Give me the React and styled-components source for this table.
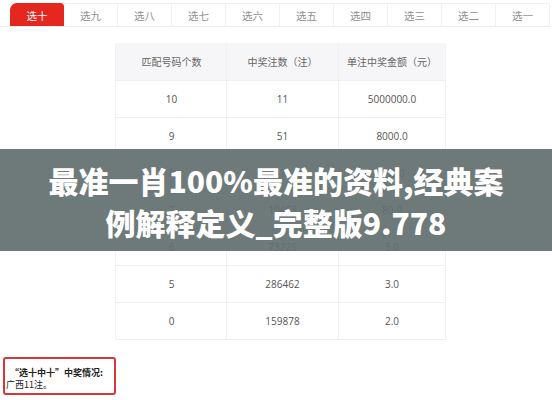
import React from 'react';
import styled, { createGlobalStyle } from 'styled-components';

const GlobalStyle = createGlobalStyle`
  body {
    margin: 0;
    background: #fff;
    font-family: "Noto Sans", "Noto Sans CJK SC", sans-serif;
  }
`;

const Page = styled.div`
  position: relative;
  width: 552px;
  height: 400px;
  overflow: hidden;
  background: #fff;
`;

const TabBar = styled.div`
  display: flex;
  padding: 3px 0 0 10px;
  border-bottom: 1px solid #ececec;
  width: 540px;
`;

const Tab = styled.div`
  width: 54px;
  height: 23px;
  box-sizing: border-box;
  display: flex;
  align-items: center;
  justify-content: center;
  font-size: 10.5px;
  font-family: "Noto Sans CJK SC", sans-serif;
  color: ${(p) => (p.$active ? '#fff' : '#8f8f8f')};
  background: ${(p) => (p.$active ? '#e5281f' : '#fff')};
  border: 1px solid ${(p) => (p.$active ? '#e5281f' : '#f0f0f0')};
  border-left: ${(p) => (p.$active ? '1px solid #e5281f' : 'none')};
  border-bottom: none;
  border-radius: ${(p) => (p.$active ? '7px 4px 0 0' : '0')};
`;

const Table = styled.div`
  margin: 16px 0 0 115px;
  width: 329px;
  border-left: 1px solid #f1f1f1;
  border-right: 1px solid #f1f1f1;
`;

const Row = styled.div`
  display: grid;
  grid-template-columns: 110px 112px 1fr;
  height: ${(p) => (p.$head ? '38px' : '37px')};
  background: ${(p) => (p.$head ? '#f6f6f8' : '#fff')};
  border-bottom: 1px solid #efefef;
  box-sizing: border-box;
`;

const Cell = styled.div`
  display: flex;
  align-items: center;
  justify-content: center;
  font-family: "Open Sans", "Noto Sans CJK SC", sans-serif;
  font-size: 10px;
  color: ${(p) => (p.$head ? '#666' : '#555')};
  border-left: 1px solid ${(p) => (p.$first ? 'transparent' : '#f1f1f1')};
`;

const Banner = styled.div`
  position: absolute;
  top: 149px;
  left: 0;
  width: 552px;
  height: 102px;
  background: rgba(98, 111, 111, 0.92);
  display: flex;
  align-items: center;
  justify-content: center;
`;

const BannerTitle = styled.div`
  color: #fff;
  font-family: "Noto Sans CJK SC", sans-serif;
  font-weight: 900;
  font-size: 30px;
  line-height: 42px;
  text-align: center;
  margin-top: 2px;
`;

const Note = styled.div`
  margin: 17px 0 0 3px;
  width: 113px;
  height: 38px;
  box-sizing: border-box;
  border: 2px solid #d9363a;
  border-radius: 3px;
  padding: 8px 0 0 1px;
  font-family: "Noto Sans CJK SC", sans-serif;
  font-size: 9px;
  line-height: 12px;
  color: #222;
`;

const NoteHead = styled.div`
  font-weight: 700;
  padding-left: 4px;
`;

const tabs = ['选十', '选九', '选八', '选七', '选六', '选五', '选四', '选三', '选二', '选一'];

const rows = [
  ['10', '11', '5000000.0'],
  ['9', '51', '8000.0'],
  ['8', '618', '800.0'],
  ['7', '10463', '80.0'],
  ['6', '73225', '5.0'],
  ['5', '286462', '3.0'],
  ['0', '159878', '2.0'],
];

const App = () => {
  return (
    <Page>
      <GlobalStyle />
      <TabBar>
        {tabs.map((t, i) => (
          <Tab key={t} $active={i === 0}>{t}</Tab>
        ))}
      </TabBar>
      <Table>
        <Row $head>
          <Cell $head $first>匹配号码个数</Cell>
          <Cell $head>中奖注数（注）</Cell>
          <Cell $head>单注中奖金额（元）</Cell>
        </Row>
        {rows.map((r) => (
          <Row key={r[0]}>
            <Cell $first>{r[0]}</Cell>
            <Cell>{r[1]}</Cell>
            <Cell>{r[2]}</Cell>
          </Row>
        ))}
      </Table>
      <Note>
        <NoteHead>“选十中十”中奖情况:</NoteHead>
        <div>广西11注。</div>
      </Note>
      <Banner>
        <BannerTitle>
          最准一肖100%最准的资料,经典案<br />例解释定义_完整版9.778
        </BannerTitle>
      </Banner>
    </Page>
  );
};

export default App;
